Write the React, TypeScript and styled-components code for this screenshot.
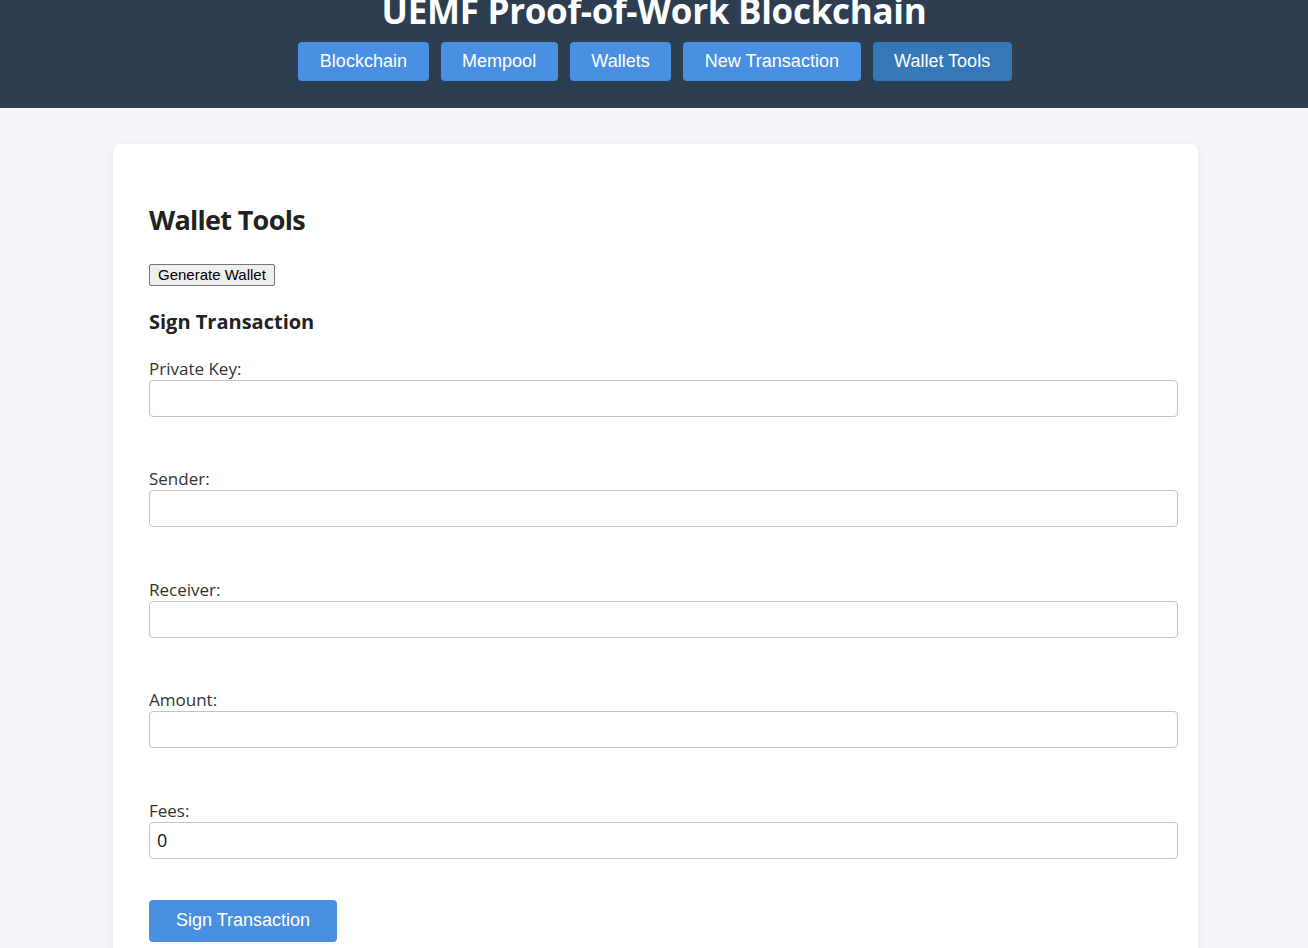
import React from 'react';
import styled, { createGlobalStyle } from 'styled-components';

const GlobalStyle = createGlobalStyle`
  html, body {
    margin: 0;
    padding: 0;
    background: #f4f5f9;
    font-family: "Open Sans", "Noto Sans", sans-serif;
    color: #222;
    overflow: hidden;
  }
`;

const Header = styled.header`
  background: #2c3e50;
  height: 108px;
  display: flex;
  flex-direction: column;
  align-items: center;
  overflow: hidden;
`;

const Title = styled.h1`
  margin: -15.5px 0 0;
  font-size: 35px;
  font-weight: 700;
  letter-spacing: -0.3px;
  color: #fff;
  line-height: 52px;
  white-space: nowrap;
`;

const Nav = styled.nav`
  display: flex;
  gap: 12px;
  margin: 5.5px 0 0 2px;
`;

const NavButton = styled.button<{ $active?: boolean }>`
  height: 39px;
  padding: 0 21.6px;
  border: none;
  border-radius: 4px;
  background: ${({ $active }) => ($active ? '#3478b8' : '#4a90e2')};
  color: #fff;
  font-family: "Liberation Sans", Arial, sans-serif;
  font-size: 18px;
  cursor: pointer;
`;

const Main = styled.main`
  padding: 36px 0 0 3px;
`;

const Card = styled.section`
  width: 1085px;
  margin: 0 auto;
  box-sizing: border-box;
  background: #fff;
  border-radius: 8px;
  box-shadow: 0 2px 8px rgba(0, 0, 0, 0.06);
  padding: 57px 36px 40px;
`;

const Heading = styled.h2`
  margin: 0 0 25px;
  font-size: 27px;
  font-weight: 700;
  letter-spacing: -0.7px;
  line-height: 38px;
  color: #222;
`;

const PlainButton = styled.button`
  display: block;
  height: 22px;
  padding: 0 8px;
  border: 1px solid #767676;
  border-radius: 2px;
  background: #efefef;
  color: #000;
  font-family: "Liberation Sans", Arial, sans-serif;
  font-size: 15px;
  line-height: 20px;
`;

const SubHeading = styled.h3`
  margin: 21.6px 0 22px;
  font-size: 20px;
  font-weight: 700;
  line-height: 27px;
  color: #222;
`;

const Field = styled.div`
  margin-bottom: 50.5px;
`;

const Label = styled.label`
  display: block;
  font-size: 17px;
  line-height: 23px;
  color: #333;
`;

const Input = styled.input`
  display: block;
  width: 100%;
  height: 21px;
  padding: 7px;
  border: 1px solid #c4c4c4;
  border-radius: 4px;
  font-family: "Open Sans", "Noto Sans", sans-serif;
  font-size: 18px;
  color: #111;
  outline: none;
`;

const PrimaryButton = styled.button`
  height: 42px;
  padding: 0 27px;
  margin-top: -10px;
  border: none;
  border-radius: 4px;
  background: #4a90e2;
  color: #fff;
  font-family: "Liberation Sans", Arial, sans-serif;
  font-size: 18px;
`;

const tabs = ['Blockchain', 'Mempool', 'Wallets', 'New Transaction', 'Wallet Tools'];

const fields = [
  { id: 'pk', label: 'Private Key:', value: '' },
  { id: 'sender', label: 'Sender:', value: '' },
  { id: 'receiver', label: 'Receiver:', value: '' },
  { id: 'amount', label: 'Amount:', value: '' },
  { id: 'fees', label: 'Fees:', value: '0' },
];

export default function App() {
  return (
    <>
      <GlobalStyle />
      <Header>
        <Title>UEMF Proof-of-Work Blockchain</Title>
        <Nav>
          {tabs.map((t) => (
            <NavButton key={t} $active={t === 'Wallet Tools'}>
              {t}
            </NavButton>
          ))}
        </Nav>
      </Header>
      <Main>
        <Card>
          <Heading>Wallet Tools</Heading>
          <PlainButton>Generate Wallet</PlainButton>
          <SubHeading>Sign Transaction</SubHeading>
          {fields.map((f) => (
            <Field key={f.id}>
              <Label htmlFor={f.id}>{f.label}</Label>
              <Input id={f.id} defaultValue={f.value} />
            </Field>
          ))}
          <PrimaryButton>Sign Transaction</PrimaryButton>
        </Card>
      </Main>
    </>
  );
}
